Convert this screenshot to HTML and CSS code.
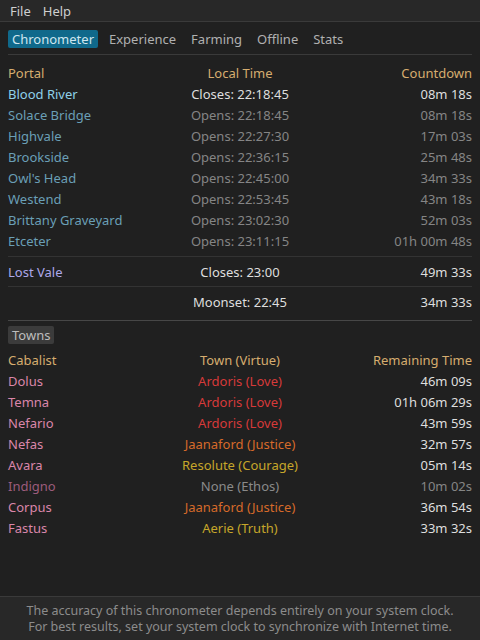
FILE: index.html
```html
<!DOCTYPE html>
<html>
<head>
<meta charset="utf-8">
<link rel="stylesheet" href="styles.css">
</head>
<body>
<div class="menubar"><span class="menu">File</span><span class="menu">Help</span></div>
<div class="tabs">
  <span class="tab active">Chronometer</span>
  <span class="tab">Experience</span>
  <span class="tab">Farming</span>
  <span class="tab">Offline</span>
  <span class="tab">Stats</span>
</div>
<main class="content">
  <div class="table">
    <div class="hd l">Portal</div><div class="hd c">Local Time</div><div class="hd r">Countdown</div>
    <div class="portal on">Blood River</div><div class="c now">Closes: 22:18:45</div><div class="r now">08m 18s</div>
    <div class="portal">Solace Bridge</div><div class="c dim">Opens: 22:18:45</div><div class="r dim">08m 18s</div>
    <div class="portal">Highvale</div><div class="c dim">Opens: 22:27:30</div><div class="r dim">17m 03s</div>
    <div class="portal">Brookside</div><div class="c dim">Opens: 22:36:15</div><div class="r dim">25m 48s</div>
    <div class="portal">Owl's Head</div><div class="c dim">Opens: 22:45:00</div><div class="r dim">34m 33s</div>
    <div class="portal">Westend</div><div class="c dim">Opens: 22:53:45</div><div class="r dim">43m 18s</div>
    <div class="portal">Brittany Graveyard</div><div class="c dim">Opens: 23:02:30</div><div class="r dim">52m 03s</div>
    <div class="portal">Etceter</div><div class="c dim">Opens: 23:11:15</div><div class="r dim">01h 00m 48s</div>
  </div>
  <div class="sep first"></div>
  <div class="table">
    <div class="vale">Lost Vale</div><div class="c now">Closes: 23:00</div><div class="r now">49m 33s</div>
  </div>
  <div class="sep"></div>
  <div class="table">
    <div></div><div class="c now">Moonset: 22:45</div><div class="r now">34m 33s</div>
  </div>
  <div class="sep strong"></div>
  <div class="btnrow"><span class="btn">Towns</span></div>
  <div class="table">
    <div class="hd l">Cabalist</div><div class="hd c">Town (Virtue)</div><div class="hd r">Remaining Time</div>
    <div class="cab">Dolus</div><div class="c love">Ardoris (Love)</div><div class="r now">46m 09s</div>
    <div class="cab">Temna</div><div class="c love">Ardoris (Love)</div><div class="r now">01h 06m 29s</div>
    <div class="cab">Nefario</div><div class="c love">Ardoris (Love)</div><div class="r now">43m 59s</div>
    <div class="cab">Nefas</div><div class="c justice">Jaanaford (Justice)</div><div class="r now">32m 57s</div>
    <div class="cab">Avara</div><div class="c courage">Resolute (Courage)</div><div class="r now">05m 14s</div>
    <div class="cab off">Indigno</div><div class="c ethos">None (Ethos)</div><div class="r dim">10m 02s</div>
    <div class="cab">Corpus</div><div class="c justice">Jaanaford (Justice)</div><div class="r now">36m 54s</div>
    <div class="cab">Fastus</div><div class="c truth">Aerie (Truth)</div><div class="r now">33m 32s</div>
  </div>
</main>
<footer class="footer">
  <div>The accuracy of this chronometer depends entirely on your system clock.</div>
  <div>For best results, set your system clock to synchronize with Internet time.</div>
</footer>
</body>
</html>
```
FILE: styles.css
```css
html, body {
  margin: 0;
  padding: 0;
}
body {
  width: 480px;
  height: 640px;
  background: #202020;
  color: #dedede;
  font-family: "Noto Sans", "DejaVu Sans", sans-serif;
  font-size: 13px;
  display: flex;
  flex-direction: column;
  overflow: hidden;
}
.menubar {
  height: 21px;
  background: #282828;
  border-bottom: 1px solid #3a3a3a;
  display: flex;
  align-items: center;
  padding: 0 4px;
}
.menu {
  color: #cfcfcf;
  padding: 0 6px;
}
.tabs {
  display: flex;
  align-items: center;
  gap: 7px;
  margin: 0 8px;
  padding: 8px 0 6px 0;
  border-bottom: 1px solid #3a3a3a;
}
.tab {
  color: #b0b0b0;
  padding: 0 4px;
  height: 18px;
  line-height: 18px;
  border-radius: 2px;
}
.tab.active {
  background: #10698b;
  color: #cfe6ef;
}
.content {
  flex: 1;
  padding: 7px 8px 0 8px;
}
.table {
  display: grid;
  grid-template-columns: 1fr auto 1fr;
  grid-auto-rows: 21px;
  align-items: center;
}
.table > div {
  white-space: nowrap;
}
.c { text-align: center; }
.r { text-align: right; }
.hd { color: #d6ad6f; }
.portal { color: #6a9fb6; }
.portal.on { color: #8fd1ea; }
.vale { color: #ada8ea; }
.now { color: #dedede; }
.dim { color: #858585; }
.sep {
  height: 1px;
  background: #333333;
  margin: 4px 0;
}
.sep.first {
  margin-top: 5px;
}
.sep.strong {
  background: #474747;
  margin: 8px 0 5px 0;
}
.btnrow {
  display: flex;
  margin-bottom: 5px;
}
.btn {
  background: #3b3b3b;
  color: #bdbdbd;
  padding: 0 4px;
  height: 18px;
  line-height: 18px;
  border-radius: 2px;
}
.cab { color: #da86aa; }
.cab.off { color: #9c5c7c; }
.love { color: #d63a3a; }
.justice { color: #d66a2a; }
.courage { color: #c6a62a; }
.truth { color: #c6a62a; }
.ethos { color: #8a8a8a; }
.footer {
  background: #282828;
  border-top: 1px solid #3a3a3a;
  height: 43px;
  display: flex;
  flex-direction: column;
  align-items: center;
  justify-content: center;
  color: #8c8c8c;
  line-height: 16px;
  font-size: 12.5px;
}
```
